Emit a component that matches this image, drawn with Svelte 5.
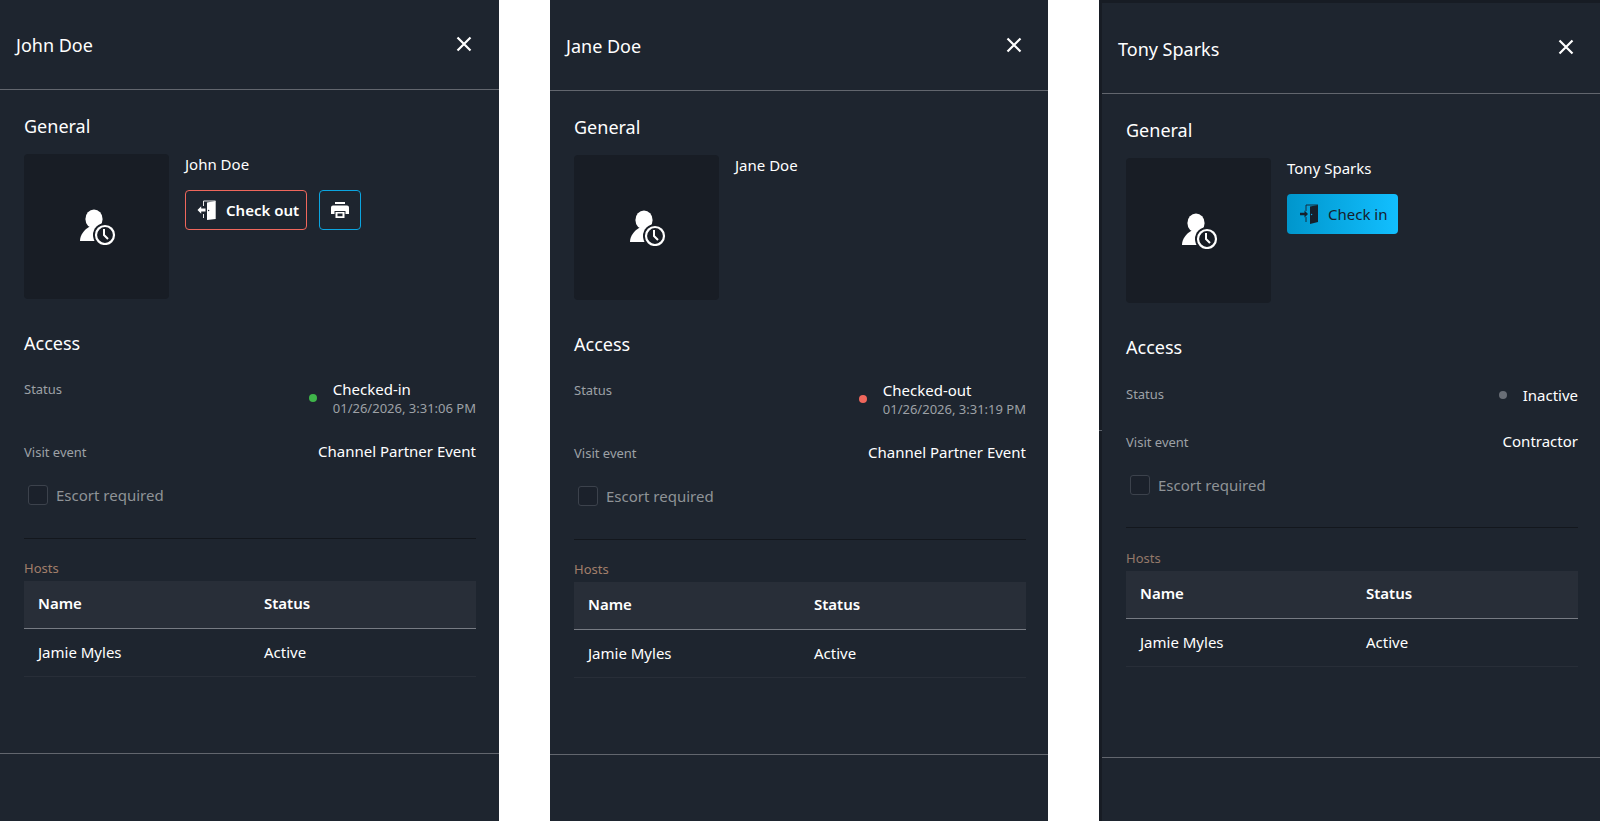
<script>
  const visitors = [
    { name: 'John Doe', kind: 'first', status: 'Checked-in', dot: 'green', time: '01/26/2026, 3:31:06 PM', event: 'Channel Partner Event', action: 'out' },
    { name: 'Jane Doe', kind: 'second', status: 'Checked-out', dot: 'red', time: '01/26/2026, 3:31:19 PM', event: 'Channel Partner Event', action: null },
    { name: 'Tony Sparks', kind: 'third', status: 'Inactive', dot: 'grey', time: null, event: 'Contractor', action: 'in' }
  ]
</script>

<div class="page">
  {#each visitors as v}
    <div class="slot {v.kind}">
      {#if v.kind === 'third'}
        <div class="edge"><span class="tick"></span></div>
      {/if}
      <section class="panel">
        <header class="head">
          <h1>{v.name}</h1>
          <svg class="close" viewBox="0 0 16 16" aria-label="Close">
            <path d="M1.5 1.5 L14.5 14.5 M14.5 1.5 L1.5 14.5" />
          </svg>
        </header>

        <div class="body">
          <h2>General</h2>
          <div class="general">
            <div class="photo">
              <svg viewBox="0 0 40 36" class="person">
                <ellipse cx="15" cy="10" rx="8.6" ry="9.4" fill="#fff" />
                <path d="M1 32 C1 26 5 21 10 18 L19 18 C24 20 27 24 27 32 Z" fill="#fff" />
                <circle cx="26" cy="26" r="12" fill="#181d25" />
                <circle cx="26" cy="26" r="9" fill="none" stroke="#fff" stroke-width="2.2" />
                <path d="M25 20 V26 L29 30" fill="none" stroke="#fff" stroke-width="2" />
              </svg>
            </div>
            <div class="info">
              <div class="person-name">{v.name}</div>
              {#if v.action}
                <div class="actions">
                  {#if v.action === 'out'}
                    <button class="btn outline">
                      <svg viewBox="0 0 20 20" class="door">
                        <path d="M6.5 1 H18.5 M6.5 1 V6 M6.5 14 V18" fill="none" stroke="#fff" stroke-width="0.9" />
                        <path d="M10 2.6 L18.7 1 V19 L10 20 Z" fill="#fff" />
                        <circle cx="11.6" cy="10.5" r="0.7" fill="#1e252f" />
                        <path d="M0.5 10 L4.2 6.3 V8.6 H8.5 V11.4 H4.2 V13.7 Z" fill="#fff" />
                      </svg>
                      Check out
                    </button>
                    <button class="btn square">
                      <svg viewBox="0 0 20 20" class="printer">
                        <path d="M5 2 H15 V4 H5 Z" fill="#fff" />
                        <path d="M3 5.5 H17 Q19 5.5 19 7.5 V14 H15.5 V11 H4.5 V14 H1 V7.5 Q1 5.5 3 5.5 Z" fill="#fff" />
                        <path d="M5.5 12 H14.5 V18 H5.5 Z M7.5 13.6 V16.2 H12.5 V13.6 Z" fill="#fff" fill-rule="evenodd" />
                      </svg>
                    </button>
                  {:else}
                    <button class="btn solid">
                      <svg viewBox="0 0 20 20" class="door">
                        <path d="M7 1 H19 M7 1 V7 M7 13 V18" fill="none" stroke="#16202c" stroke-width="0.9" />
                        <path d="M11 2.6 L19 1 V18 L11 20 Z" fill="#16202c" />
                        <path d="M9 10 L5.5 6.5 V8.8 H1 V11.2 H5.5 V13.5 Z" fill="#16202c" />
                        <circle cx="12.6" cy="10.5" r="0.7" fill="#0aa8e2" />
                      </svg>
                      Check in
                    </button>
                  {/if}
                </div>
              {/if}
            </div>
          </div>

          <h2 class="access">Access</h2>
          <div class="row status-row">
            <span class="label">Status</span>
            <div class="status">
              <span class="dot {v.dot}"></span>
              <div class="status-text">
                <div class="value">{v.status}</div>
                {#if v.time}
                  <div class="time">{v.time}</div>
                {/if}
              </div>
            </div>
          </div>
          <div class="row event-row">
            <span class="label">Visit event</span>
            <span class="value">{v.event}</span>
          </div>
          <div class="escort">
            <span class="check"></span>
            <span>Escort required</span>
          </div>

          <hr />

          <div class="hosts">Hosts</div>
          <table>
            <thead>
              <tr><th>Name</th><th>Status</th></tr>
            </thead>
            <tbody>
              <tr><td>Jamie Myles</td><td>Active</td></tr>
            </tbody>
          </table>
        </div>

        <footer class="foot"></footer>
      </section>
    </div>
  {/each}
</div>

<style>
  :global(body) {
    background: #fff;
  }

  .page {
    display: flex;
    height: 821px;
    overflow: hidden;
    font-family: "Noto Sans", "Open Sans", sans-serif;
    color: #fff;
  }

  .slot {
    display: flex;
    flex: none;
    height: 821px;
    overflow: hidden;
    background: #1e252f;
  }
  .first { width: 499px; margin-right: 51px; }
  .second { width: 498px; margin-right: 51px; padding-top: 1px; box-sizing: border-box; }
  .third { width: 501px; background: #171c24; }

  .edge {
    width: 3px;
    flex: none;
    background: #171c24;
  }
  .tick {
    display: block;
    margin-top: 430px;
    height: 1px;
    background: #5c626b;
  }

  .panel {
    flex: none;
    width: 500px;
    background: #1e252f;
    display: flex;
    flex-direction: column;
  }
  .third .panel {
    margin-top: 3px;
    height: 818px;
  }

  .head {
    height: 90px;
    flex: none;
    box-sizing: border-box;
    border-bottom: 1px solid #62666e;
    display: flex;
    align-items: center;
    justify-content: space-between;
    padding: 0 28px 1px 16px;
  }
  .third .head {
    height: 91px;
  }
  .head h1 {
    margin: 2px 0 0;
    font-size: 18px;
    font-weight: 400;
  }
  .close {
    width: 16px;
    height: 16px;
    margin-bottom: 1px;
  }
  .close path {
    stroke: #fff;
    stroke-width: 2.2;
    fill: none;
  }

  .body {
    flex: 1;
    padding: 23px 24px 0;
  }
  h2 {
    margin: 0;
    font-size: 18px;
    font-weight: 400;
    line-height: 26px;
  }

  .general {
    display: flex;
    gap: 16px;
    margin-top: 15px;
  }
  .photo {
    width: 145px;
    height: 145px;
    background: #181d25;
    border-radius: 4px;
    display: flex;
    align-items: center;
    justify-content: center;
  }
  .person {
    width: 40px;
    height: 36px;
    margin: 0 0 0 5px;
  }
  .person-name {
    font-size: 15px;
    line-height: 20px;
  }
  .actions {
    display: flex;
    gap: 12px;
    margin-top: 16px;
  }
  .btn {
    height: 40px;
    box-sizing: border-box;
    border-radius: 4px;
    background: transparent;
    color: #fff;
    font-family: inherit;
    font-size: 15px;
    font-weight: 600;
    display: flex;
    align-items: center;
    gap: 9px;
    padding: 0;
  }
  .door {
    width: 20px;
    height: 20px;
  }
  .outline {
    width: 122px;
    border: 1px solid #f0675c;
    padding-left: 11px;
  }
  .square {
    width: 42px;
    border: 1px solid #0ba5e0;
    justify-content: center;
  }
  .printer {
    width: 20px;
    height: 20px;
  }
  .solid {
    width: 111px;
    border: 0;
    padding-left: 12px;
    font-weight: 400;
    color: #16202c;
    background: linear-gradient(90deg, #0096cc, #12bfff);
  }

  .access {
    margin-top: 31px;
  }
  .row {
    display: flex;
    justify-content: space-between;
  }
  .label {
    font-size: 13px;
    color: #9da1a6;
  }
  .value {
    font-size: 15px;
    line-height: 20px;
  }
  .status-row {
    margin-top: 24px;
    min-height: 40px;
  }
  .third .status-row {
    min-height: 20px;
  }
  .third .status-row .label {
    margin-top: 1px;
  }
  .status {
    display: flex;
    align-items: center;
    gap: 16px;
    height: 40px;
    margin-top: -2px;
  }
  .third .status {
    height: 22px;
    margin-top: 0;
  }
  .status-text {
    display: flex;
    flex-direction: column;
  }
  .time {
    font-size: 13px;
    line-height: 18px;
    color: #9da1a6;
  }
  .dot {
    width: 8px;
    height: 8px;
    border-radius: 50%;
    margin-top: -1px;
  }
  .green { background: #3fb54a; }
  .red { background: #f0675c; }
  .grey { background: #696e76; }

  .event-row {
    margin-top: 23px;
  }
  .event-row .value {
    margin-top: -2px;
  }
  .third .event-row {
    margin-top: 27px;
  }

  .escort {
    display: flex;
    align-items: center;
    gap: 8px;
    margin: 24px 0 0 4px;
    font-size: 15px;
    color: #8f9397;
  }
  .check {
    width: 18px;
    height: 18px;
    border: 1px solid #3c424c;
    border-radius: 3px;
    background: #1b212b;
  }

  hr {
    border: 0;
    height: 1px;
    background: #13171d;
    margin: 33px 0 0;
  }
  .third hr {
    margin-top: 32px;
  }
  .hosts {
    margin: 20px 0 4px;
    font-size: 13px;
    line-height: 18px;
    color: #a17f6b;
  }
  .third .hosts {
    margin-top: 21px;
    color: #94796a;
  }

  table {
    width: 100%;
    border-collapse: collapse;
    table-layout: fixed;
    font-size: 15px;
  }
  th {
    height: 47px;
    padding: 0 14px 2px;
    box-sizing: border-box;
    text-align: left;
    font-weight: 600;
    background: #282e38;
    border-bottom: 1px solid #777b83;
  }
  td {
    height: 48px;
    padding: 0 14px 1px;
    box-sizing: border-box;
    border-bottom: 1px solid #282e38;
  }
  th:first-child,
  td:first-child {
    width: 50%;
  }

  .foot {
    height: 68px;
    flex: none;
    box-sizing: border-box;
    border-top: 1px solid #62666e;
  }
  .second .foot {
    height: 67px;
  }
  .third .foot {
    height: 64px;
  }
</style>
